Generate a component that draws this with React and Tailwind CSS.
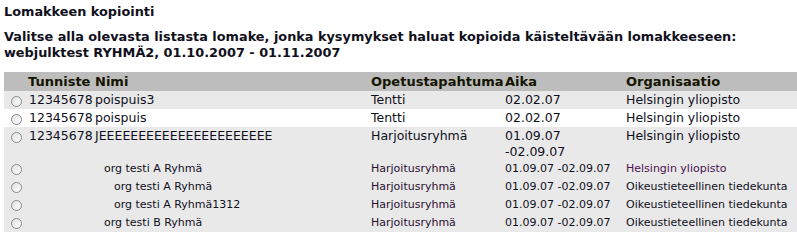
import React from "react";

const bigRows = [
  { id: "12345678", name: "poispuis3", event: "Tentti", time: ["02.02.07"], org: "Helsingin yliopisto", bg: "bg-[#e9e9e9]" },
  { id: "12345678", name: "poispuis", event: "Tentti", time: ["02.02.07"], org: "Helsingin yliopisto", bg: "bg-white" },
  { id: "12345678", name: "JEEEEEEEEEEEEEEEEEEEEEE", event: "Harjoitusryhmä", time: ["01.09.07", "-02.09.07"], org: "Helsingin yliopisto", bg: "bg-[#e9e9e9]" },
];

const subRows = [
  { name: "org testi A Ryhmä", indent: "pl-[9px]", org: "Helsingin yliopisto", purple: true },
  { name: "org testi A Ryhmä", indent: "pl-[19px]", org: "Oikeustieteellinen tiedekunta" },
  { name: "org testi A Ryhmä1312", indent: "pl-[19px]", org: "Oikeustieteellinen tiedekunta" },
  { name: "org testi B Ryhmä", indent: "pl-[9px]", org: "Oikeustieteellinen tiedekunta" },
];

function Radio() {
  return (
    <span className="inline-block w-[11px] h-[11px] rounded-full border border-[#8a8a8a] bg-gradient-to-br from-[#e0e0e0] to-white align-middle" />
  );
}

export default function App() {
  return (
    <div className="pl-1 pt-1 font-['DejaVu_Sans','Verdana',sans-serif] text-[#10101c]">
      <h1 className="text-[12.85px] font-bold leading-[16px]">Lomakkeen kopiointi</h1>
      <h2 className="mt-[9px] text-[12.85px] font-bold leading-[16px]">
        Valitse alla olevasta listasta lomake, jonka kysymykset haluat kopioida käisteltävään lomakkeeseen:
        <br />
        webjulktest RYHMÄ2, 01.10.2007 - 01.11.2007
      </h2>

      <table className="mt-[11px] w-[793px] table-fixed border-collapse">
        <colgroup>
          <col className="w-[24px]" />
          <col className="w-[67px]" />
          <col className="w-[276px]" />
          <col className="w-[134px]" />
          <col className="w-[121px]" />
          <col className="w-[171px]" />
        </colgroup>
        <thead>
          <tr className="bg-[#bdbdbd] h-[19px] text-left text-[13px] font-bold leading-[16px] text-[#141400]">
            <th />
            <th className="font-bold">Tunniste</th>
            <th className="font-bold">Nimi</th>
            <th className="font-bold">Opetustapahtuma</th>
            <th className="font-bold">Aika</th>
            <th className="font-bold">Organisaatio</th>
          </tr>
        </thead>
        <tbody>
          {bigRows.map((r, i) => (
            <tr key={i} className={`${r.bg} text-[12.5px] leading-[16px] align-top`}>
              <td className="pl-[7px] pt-[2px]">
                <Radio />
              </td>
              <td className="pl-px pt-px whitespace-nowrap">{r.id}</td>
              <td className="pt-px whitespace-nowrap">{r.name}</td>
              <td className="pt-px">{r.event}</td>
              <td className="pt-px">
                {r.time.map((t) => (
                  <div key={t}>{t}</div>
                ))}
              </td>
              <td className="pt-px whitespace-nowrap">{r.org}</td>
            </tr>
          ))}
          {subRows.map((r, i) => (
            <tr key={i} className="bg-[#e9e9e9] h-[18px] text-[11px] leading-[14px] align-middle">
              <td className="pl-[7px]">
                <Radio />
              </td>
              <td />
              <td className={`${r.indent} whitespace-nowrap`}>{r.name}</td>
              <td className="text-[#2a1030]">Harjoitusryhmä</td>
              <td className="whitespace-nowrap">01.09.07 -02.09.07</td>
              <td className={`whitespace-nowrap ${r.purple ? "text-[#4a1050]" : ""}`}>{r.org}</td>
            </tr>
          ))}
        </tbody>
      </table>
    </div>
  );
}
